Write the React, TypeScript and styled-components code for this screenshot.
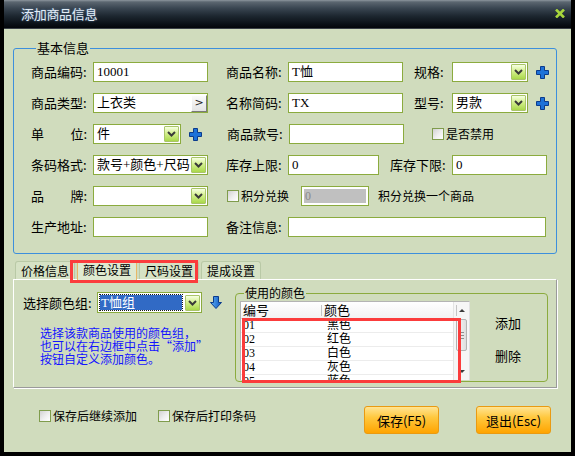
import React from "react";
import styled, { createGlobalStyle } from "styled-components";

const CJK = `"Noto Sans CJK SC", "Noto Sans", sans-serif`;
const VALUE = `"Liberation Serif", "Noto Sans CJK SC", serif`;

const GlobalStyle = createGlobalStyle`
  html, body {
    margin: 0;
    padding: 0;
    background: #000;
  }
  body {
    font-family: ${CJK};
    font-size: 12px;
    color: #000;
  }
`;

const Frame = styled.div`
  width: 575px;
  height: 456px;
  box-sizing: border-box;
  padding: 0 4px 4px;
  background: #000;
  display: flex;
  flex-direction: column;
`;

const TitleBar = styled.div`
  flex: none;
  height: 29px;
  box-sizing: border-box;
  display: flex;
  align-items: center;
  justify-content: space-between;
  padding: 0 6px 1px 17px;
  background: linear-gradient(
    to bottom,
    #8d969e 0px,
    #5b6670 2px,
    #3a4652 8px,
    #1d2730 16px,
    #0a1016 24px,
    #03060a 28px
  );
  border-bottom: 1px solid #3a4046;
`;

const Title = styled.span`
  font-size: 13px;
  color: #e2ecf6;
  letter-spacing: -0.3px;
  text-shadow: 0 0 2px rgba(120, 170, 230, 0.7);
`;

const Body = styled.div`
  flex: 1;
  min-height: 0;
  background: #d0dcbd;
  padding: 11px 14px 0 9px;
  display: flex;
  flex-direction: column;
`;

const Group = styled.fieldset`
  margin: 0;
  padding: 6px 0 16px 17px;
  min-width: 0;
  border: 1px solid #3d8fdc;
  border-radius: 3px;
`;

const GroupTitle = styled.legend`
  margin-left: 5px;
  padding: 0 1px;
  font-size: 13px;
  line-height: 16px;
`;

const Rows = styled.div`
  display: flex;
  flex-direction: column;
  gap: 11px;
`;

const Row = styled.div`
  display: flex;
  align-items: center;
  height: 20px;
`;

const Label = styled.span<{ $w: number; $ml?: number }>`
  flex: none;
  width: ${(p) => p.$w}px;
  margin-left: ${(p) => p.$ml ?? 0}px;
  font-size: 13px;
  line-height: 16px;
  white-space: nowrap;
`;

const SpreadLabel = styled.span`
  flex: none;
  width: 56px;
  margin-right: 6px;
  display: flex;
  justify-content: space-between;
  font-size: 13px;
  line-height: 16px;
`;

const Field = styled.div<{ $w: number; $ml?: number }>`
  flex: none;
  width: ${(p) => p.$w}px;
  height: 20px;
  margin-left: ${(p) => p.$ml ?? 0}px;
  box-sizing: border-box;
  border: 1px solid #8bab3e;
  background: #fff;
  display: flex;
  align-items: center;
  padding-left: 3px;
  font-family: ${VALUE};
  font-size: 13px;
  line-height: 16px;
  white-space: nowrap;
  overflow: hidden;
`;

const DropBtn = styled.span`
  flex: none;
  width: 15px;
  height: 16px;
  margin-left: auto;
  margin-right: 1px;
  box-sizing: border-box;
  border: 1px solid #a9c46a;
  border-radius: 1px;
  background: linear-gradient(to bottom, #f6ffe2 0%, #d4f08e 45%, #a9d84a 100%);
  display: flex;
  align-items: center;
  justify-content: center;
`;

const PickBtn = styled.span`
  flex: none;
  width: 16px;
  height: 17px;
  margin-left: auto;
  box-sizing: border-box;
  border: 1px solid;
  border-color: #fff #7a7a7a #7a7a7a #fff;
  background: linear-gradient(to bottom, #fafafa, #e4e4e4);
  display: flex;
  align-items: center;
  justify-content: center;
  font-family: "DejaVu Sans", sans-serif;
  font-size: 11px;
  color: #222;
`;

const GreyField = styled.div<{ $w: number; $ml?: number }>`
  flex: none;
  width: ${(p) => p.$w}px;
  height: 20px;
  margin-left: ${(p) => p.$ml ?? 0}px;
  box-sizing: border-box;
  border: 1px solid #8bab3e;
  padding: 2px;
  background: #fff;
  span {
    display: block;
    height: 100%;
    background: #c0c0c0;
    color: #8a8a8a;
    font-family: ${VALUE};
    font-size: 12px;
    line-height: 14px;
    padding-left: 1px;
  }
`;

const CheckItem = styled.label<{ $ml?: number }>`
  flex: none;
  display: flex;
  align-items: center;
  gap: 2px;
  margin-left: ${(p) => p.$ml ?? 0}px;
  font-size: 12px;
  line-height: 16px;
  white-space: nowrap;
`;

const Box = styled.span`
  flex: none;
  width: 12px;
  height: 12px;
  box-sizing: border-box;
  border: 1px solid #7f9c4c;
  background: linear-gradient(135deg, #d2d2d2 0%, #efefef 55%, #ffffff 100%);
`;

const Note = styled.span<{ $ml?: number }>`
  flex: none;
  margin-left: ${(p) => p.$ml ?? 0}px;
  font-size: 12px;
  line-height: 16px;
  white-space: nowrap;
`;

const IconSlot = styled.span<{ $ml?: number }>`
  flex: none;
  display: flex;
  margin-left: ${(p) => p.$ml ?? 0}px;
`;

const TabStrip = styled.div`
  position: relative;
  flex: none;
  height: 25px;
  display: flex;
  align-items: flex-end;
  gap: 2px;
  padding-left: 2px;
`;

const Tab = styled.div<{ $active?: boolean }>`
  height: ${(p) => (p.$active ? 20 : 18)}px;
  box-sizing: border-box;
  padding: 0 5px;
  margin-bottom: ${(p) => (p.$active ? -1 : 0)}px;
  border: 1px solid ${(p) => (p.$active ? "#e8b866" : "#b9c9a6")};
  border-bottom: none;
  border-radius: 3px 3px 0 0;
  background: ${(p) => (p.$active ? "#dfe9d0" : "#d6e2c5")};
  font-size: 12px;
  line-height: 17px;
  position: relative;
  z-index: 1;
`;

const Callout = styled.div<{ $x: number; $y: number; $w: number; $h: number }>`
  position: absolute;
  left: ${(p) => p.$x}px;
  top: ${(p) => p.$y}px;
  width: ${(p) => p.$w}px;
  height: ${(p) => p.$h}px;
  box-sizing: border-box;
  border: 3px solid #fb3c3c;
  pointer-events: none;
  z-index: 3;
`;

const TabPanel = styled.div`
  flex: none;
  height: 109px;
  box-sizing: border-box;
  border: 1px solid;
  border-color: #ffffff #9a9a9a #9a9a9a #ffffff;
  box-shadow: 1px 1px 0 #fff;
  padding: 5px 8px 5px 9px;
  display: flex;
`;

const LeftCol = styled.div`
  flex: none;
  width: 212px;
  padding-top: 7px;
`;

const PickRow = styled.div`
  display: flex;
  align-items: center;
  height: 21px;
`;

const GroupSelect = styled.div`
  flex: none;
  width: 105px;
  height: 21px;
  box-sizing: border-box;
  border: 1px solid #8bab3e;
  background: #fff;
  display: flex;
  align-items: center;
  padding-left: 2px;
`;

const Picked = styled.span`
  width: 82px;
  height: 15px;
  box-sizing: border-box;
  background: #316ac5;
  outline: 1px dotted #1a1a1a;
  color: #fff;
  font-family: ${VALUE};
  font-size: 13px;
  line-height: 15px;
  padding-left: 1px;
`;

const Hint = styled.p`
  margin: 13px 0 0 17px;
  color: #1414ff;
  font-size: 12px;
  line-height: 13px;
`;

const ColorGroup = styled.fieldset`
  flex: 1;
  margin: 0;
  padding: 0 0 1px 4px;
  min-width: 0;
  border: 1px solid #8bab3e;
  border-radius: 4px;
  display: flex;
`;

const ColorLegend = styled.legend`
  margin-left: 4px;
  padding: 0 1px;
  font-size: 12px;
  line-height: 16px;
`;

const ListWrap = styled.div`
  position: relative;
  flex: none;
  width: 230px;
  height: 79px;
`;

const ListBox = styled.div`
  width: 100%;
  height: 100%;
  box-sizing: border-box;
  border: 1px solid #b4b4b4;
  border-right-color: #e2e2e2;
  border-bottom: none;
  background: #fff;
  display: flex;
  overflow: hidden;
`;

const ListBody = styled.div`
  flex: 1;
  min-width: 0;
  display: flex;
  flex-direction: column;
`;

const ListHead = styled.div`
  flex: none;
  height: 16px;
  display: flex;
  border-bottom: 1px solid #d6d6d6;
  background: linear-gradient(to bottom, #ffffff, #f2f2f2);
  font-size: 13px;
  line-height: 16px;
`;

const HeadCell = styled.div<{ $w?: number }>`
  position: relative;
  flex: ${(p) => (p.$w ? "none" : "1")};
  width: ${(p) => (p.$w ? `${p.$w}px` : "auto")};
  padding-left: 2px;
  &::after {
    content: "";
    position: absolute;
    right: 0;
    top: 3px;
    bottom: 2px;
    width: 1px;
    background: #c4c4c4;
  }
`;

const ListRow = styled.div`
  flex: none;
  height: 13px;
  display: flex;
  border-bottom: 1px solid #ececec;
  font-size: 12px;
  line-height: 13px;
`;

const Cell = styled.div<{ $w?: number; $pl: number }>`
  flex: ${(p) => (p.$w ? "none" : "1")};
  width: ${(p) => (p.$w ? `${p.$w}px` : "auto")};
  padding-left: ${(p) => p.$pl}px;
  box-sizing: border-box;
  font-family: ${VALUE};
`;

const ScrollBar = styled.div`
  flex: none;
  width: 15px;
  background: #f6f6f6;
  border-left: 1px solid #e4e4e4;
  display: flex;
  flex-direction: column;
  align-items: center;
`;

const ScrollArrow = styled.span<{ $down?: boolean }>`
  flex: none;
  height: 17px;
  display: flex;
  align-items: center;
  justify-content: center;
  &::before {
    content: "";
    border-left: 3px solid transparent;
    border-right: 3px solid transparent;
    ${(p) =>
      p.$down
        ? "border-top: 3px solid #3c3c3c;"
        : "border-bottom: 3px solid #3c3c3c;"}
  }
`;

const Thumb = styled.span`
  flex: none;
  width: 11px;
  height: 32px;
  box-sizing: border-box;
  border: 1px solid #b2b2b2;
  border-radius: 2px;
  background: linear-gradient(to right, #f8f8f8, #dedede);
  display: flex;
  flex-direction: column;
  justify-content: center;
  align-items: center;
  gap: 2px;
  i {
    width: 5px;
    height: 1px;
    background: #8c8c8c;
  }
`;

const ScrollGap = styled.span`
  flex: 1;
`;

const ActionCol = styled.div`
  flex: none;
  margin-left: 25px;
  padding-top: 15px;
  display: flex;
  flex-direction: column;
  gap: 20px;
  font-size: 13px;
  line-height: 13px;
`;

const Footer = styled.div`
  flex: 1;
  display: flex;
  align-items: center;
  padding: 0 6px 0 26px;
`;

const FooterChecks = styled.div`
  display: flex;
  align-items: center;
  gap: 21px;
  margin-bottom: 9px;
`;

const OrangeButton = styled.button<{ $ml?: string }>`
  flex: none;
  width: 75px;
  height: 28px;
  margin-left: ${(p) => p.$ml ?? "0"};
  padding: 0;
  border: 1px solid #e99a12;
  border-radius: 3px;
  background: linear-gradient(to bottom, #ffe493 0%, #ffc83e 40%, #ffa400 100%);
  font-family: ${CJK};
  font-size: 13px;
  color: #000;
`;

const Plus = () => (
  <svg width="13" height="13" viewBox="0 0 13 13">
    <path
      d="M4.5 0.5h4v4h4v4h-4v4h-4v-4h-4v-4h4z"
      fill="#1d72d8"
      stroke="#0b3b8c"
      strokeWidth="1"
    />
  </svg>
);

const Chevron = () => (
  <svg width="9" height="6" viewBox="0 0 9 6">
    <path d="M1 1 L4.5 4.5 L8 1" fill="none" stroke="#3a3a3a" strokeWidth="2" />
  </svg>
);

const DownArrow = () => (
  <svg width="12" height="13" viewBox="0 0 12 13">
    <defs>
      <linearGradient id="da" x1="0" y1="0" x2="1" y2="0">
        <stop offset="0" stopColor="#5fb0f6" />
        <stop offset="1" stopColor="#0c55bf" />
      </linearGradient>
    </defs>
    <path
      d="M3.5 0.5h5v6h3l-5.5 6l-5.5-6h3z"
      fill="url(#da)"
      stroke="#0b3b8c"
      strokeWidth="1"
    />
  </svg>
);

const CloseX = () => (
  <svg width="10" height="9" viewBox="0 0 10 9">
    <path d="M1 0.5 L9 8.5 M9 0.5 L1 8.5" stroke="#a8d63c" strokeWidth="2.6" />
  </svg>
);

const Select = ({ w, ml, value }: { w: number; ml?: number; value?: string }) => (
  <Field $w={w} $ml={ml}>
    {value}
    <DropBtn>
      <Chevron />
    </DropBtn>
  </Field>
);

const colors = [
  ["01", "黑色"],
  ["02", "红色"],
  ["03", "白色"],
  ["04", "灰色"],
  ["05", "蓝色"],
];

export default function App() {
  return (
    <>
      <GlobalStyle />
      <Frame>
        <TitleBar>
          <Title>添加商品信息</Title>
          <CloseX />
        </TitleBar>
        <Body>
          <Group>
            <GroupTitle>基本信息</GroupTitle>
            <Rows>
              <Row>
                <Label $w={62}>商品编码:</Label>
                <Field $w={115}>10001</Field>
                <Label $w={62} $ml={18}>商品名称:</Label>
                <Field $w={115}>T恤</Field>
                <Label $w={38} $ml={11}>规格:</Label>
                <Select w={76} />
                <IconSlot $ml={8}>
                  <Plus />
                </IconSlot>
              </Row>
              <Row>
                <Label $w={62}>商品类型:</Label>
                <Field $w={115}>
                  上衣类
                  <PickBtn>&gt;</PickBtn>
                </Field>
                <Label $w={62} $ml={18}>名称简码:</Label>
                <Field $w={115}>TX</Field>
                <Label $w={38} $ml={11}>型号:</Label>
                <Select w={76} value="男款" />
                <IconSlot $ml={8}>
                  <Plus />
                </IconSlot>
              </Row>
              <Row>
                <SpreadLabel>
                  <span>单</span>
                  <span>位:</span>
                </SpreadLabel>
                <Select w={88} value="件" />
                <IconSlot $ml={8}>
                  <Plus />
                </IconSlot>
                <Label $w={62} $ml={25}>商品款号:</Label>
                <Field $w={115} />
                <CheckItem $ml={28}>
                  <Box />
                  是否禁用
                </CheckItem>
              </Row>
              <Row>
                <Label $w={62}>条码格式:</Label>
                <Select w={115} value="款号+颜色+尺码" />
                <Label $w={62} $ml={18}>库存上限:</Label>
                <Field $w={91}>0</Field>
                <Label $w={62} $ml={11}>库存下限:</Label>
                <Field $w={95}>0</Field>
              </Row>
              <Row>
                <SpreadLabel>
                  <span>品</span>
                  <span>牌:</span>
                </SpreadLabel>
                <Select w={115} />
                <CheckItem $ml={19}>
                  <Box />
                  积分兑换
                </CheckItem>
                <GreyField $w={68} $ml={12}>
                  <span>0</span>
                </GreyField>
                <Note $ml={9}>积分兑换一个商品</Note>
              </Row>
              <Row>
                <Label $w={62}>生产地址:</Label>
                <Field $w={115} />
                <Label $w={62} $ml={18}>备注信息:</Label>
                <Field $w={258} />
              </Row>
            </Rows>
          </Group>

          <TabStrip>
            <Tab>价格信息</Tab>
            <Tab $active>颜色设置</Tab>
            <Tab>尺码设置</Tab>
            <Tab>提成设置</Tab>
            <Callout $x={57} $y={6} $w={128} $h={23} />
          </TabStrip>

          <TabPanel>
            <LeftCol>
              <PickRow>
                <Label $w={74}>选择颜色组:</Label>
                <GroupSelect>
                  <Picked>T恤组</Picked>
                  <DropBtn>
                    <Chevron />
                  </DropBtn>
                </GroupSelect>
                <IconSlot $ml={8}>
                  <DownArrow />
                </IconSlot>
              </PickRow>
              <Hint>
                选择该款商品使用的颜色组，
                <br />
                也可以在右边框中点击“添加”
                <br />
                按钮自定义添加颜色。
              </Hint>
            </LeftCol>

            <ColorGroup>
              <ColorLegend>使用的颜色</ColorLegend>
              <ListWrap>
                <ListBox>
                  <ListBody>
                    <ListHead>
                      <HeadCell $w={79}>编号</HeadCell>
                      <HeadCell $w={133}>颜色</HeadCell>
                    </ListHead>
                    {colors.map(([code, name]) => (
                      <ListRow key={code}>
                        <Cell $w={79} $pl={2}>
                          {code}
                        </Cell>
                        <Cell $pl={7}>{name}</Cell>
                      </ListRow>
                    ))}
                  </ListBody>
                  <ScrollBar>
                    <ScrollArrow />
                    <Thumb>
                      <i />
                      <i />
                      <i />
                    </Thumb>
                    <ScrollGap />
                    <ScrollArrow $down />
                  </ScrollBar>
                </ListBox>
                <Callout $x={2} $y={17} $w={219} $h={65} />
              </ListWrap>
              <ActionCol>
                <span>添加</span>
                <span>删除</span>
              </ActionCol>
            </ColorGroup>
          </TabPanel>

          <Footer>
            <FooterChecks>
              <CheckItem>
                <Box />
                保存后继续添加
              </CheckItem>
              <CheckItem>
                <Box />
                保存后打印条码
              </CheckItem>
            </FooterChecks>
            <OrangeButton $ml="auto">保存(F5)</OrangeButton>
            <OrangeButton $ml="37px">退出(Esc)</OrangeButton>
          </Footer>
        </Body>
      </Frame>
    </>
  );
}
